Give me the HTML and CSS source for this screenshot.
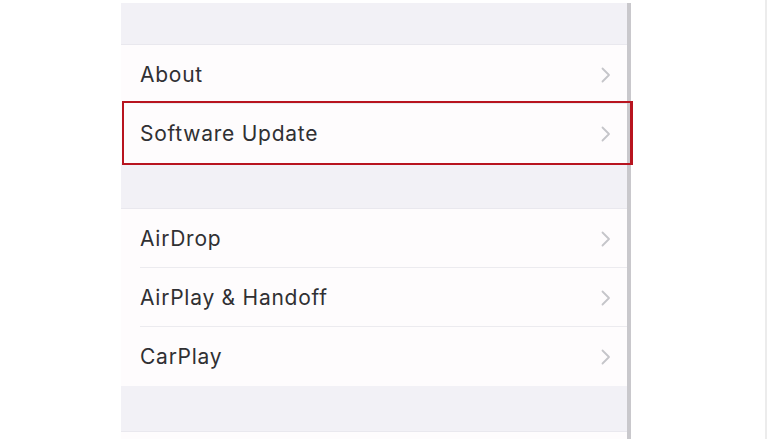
FILE: index.html
```html
<!DOCTYPE html>
<html>
<head>
<meta charset="utf-8">
<link rel="stylesheet" href="styles.css">
</head>
<body>
<div class="screen">
  <div class="gutter"></div>
  <div class="panel">
    <div class="section section-top"></div>
    <div class="group">
      <div class="row"><span class="label">About</span><svg class="chev" viewBox="0 0 10 16"><path d="M1.5 1.5 L8 8 L1.5 14.5"/></svg></div>
      <div class="row row-last highlighted"><span class="label">Software Update</span><svg class="chev" viewBox="0 0 10 16"><path d="M1.5 1.5 L8 8 L1.5 14.5"/></svg><div class="outline"></div></div>
    </div>
    <div class="section"></div>
    <div class="group">
      <div class="row"><span class="label">AirDrop</span><svg class="chev" viewBox="0 0 10 16"><path d="M1.5 1.5 L8 8 L1.5 14.5"/></svg></div>
      <div class="row"><span class="label">AirPlay &amp; Handoff</span><svg class="chev" viewBox="0 0 10 16"><path d="M1.5 1.5 L8 8 L1.5 14.5"/></svg></div>
      <div class="row row-last"><span class="label">CarPlay</span><svg class="chev" viewBox="0 0 10 16"><path d="M1.5 1.5 L8 8 L1.5 14.5"/></svg></div>
    </div>
    <div class="section"></div>
    <div class="group group-tail"></div>
  </div>
  <div class="scrollline"></div>
  <div class="blank"></div>
  <div class="edge"></div>
</div>
</body>
</html>
```
FILE: styles.css
```css
html, body {
  margin: 0;
  padding: 0;
  background: #ffffff;
  font-family: "Liberation Sans", Arial, sans-serif;
}
.screen {
  display: flex;
  height: 439px;
  overflow: hidden;
}
.gutter {
  width: 121px;
  flex: none;
}
.panel {
  width: 506px;
  flex: none;
  padding-top: 3px;
  background: #fefcfd;
  background-clip: content-box;
  display: flex;
  flex-direction: column;
}
.section {
  height: 45px;
  background: #f2f1f6;
  border-bottom: 1px solid #e9e8ee;
  flex: none;
}
.section-top {
  height: 41px;
}
.group {
  background: #fefcfd;
  flex: none;
}
.group-tail {
  flex: 1;
}
.row {
  position: relative;
  height: 59px;
  display: flex;
  align-items: center;
  padding-left: 19px;
  padding-right: 16px;
}
.row::after {
  content: "";
  position: absolute;
  left: 19px;
  right: 0;
  bottom: 0;
  height: 1px;
  background: #ecebef;
}
.row-last::after {
  display: none;
}
.label {
  flex: 1;
  font-family: Inter, "Liberation Sans", Arial, sans-serif;
  font-size: 21px;
  color: #303033;
  letter-spacing: 0.75px;
}
.chev {
  width: 10px;
  height: 16px;
  fill: none;
  stroke: #c5c5c9;
  stroke-width: 1.8;
  stroke-linecap: round;
  stroke-linejoin: round;
}
.outline {
  position: absolute;
  left: 1px;
  right: -6px;
  top: -3px;
  bottom: -2px;
  border: 2px solid #b8141f;
  border-right-width: 3px;
  pointer-events: none;
}
.scrollline {
  width: 4px;
  flex: none;
  margin-top: 3px;
  background: #c9c8cc;
}
.blank {
  flex: 1;
}
.edge {
  width: 2px;
  flex: none;
  background: #ececec;
  margin-right: 1px;
}
```
